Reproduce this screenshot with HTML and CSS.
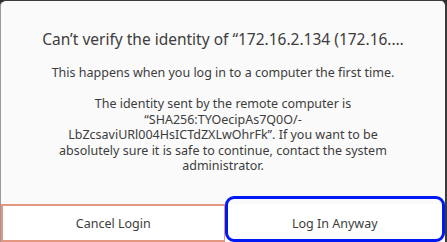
FILE: index.html
```html
<!DOCTYPE html>
<html>
<head>
<meta charset="utf-8">
<link rel="stylesheet" href="styles.css">
</head>
<body>
<div class="dialog">
  <div class="content">
    <h1 class="title">Can’t verify the identity of “172.16.2.134 (172.16.…</h1>
    <p class="msg">This happens when you log in to a computer the first time.</p>
    <p class="msg detail">The identity sent by the remote computer is “SHA256:TYOecipAs7Q0O/-<br>LbZcsaviURl004HsICTdZXLwOhrFk”. If you want to be absolutely sure it is safe to continue, contact the system administrator.</p>
  </div>
  <div class="actions">
    <button class="btn cancel">Cancel Login</button>
    <button class="btn accept">Log In Anyway</button>
  </div>
</div>
</body>
</html>
```
FILE: styles.css
```css
html, body {
  margin: 0;
  padding: 0;
  width: 447px;
  height: 242px;
  overflow: hidden;
  background: #2c2c2c;
}
.dialog {
  box-sizing: border-box;
  width: 447px;
  height: 242px;
  background: #fafafa;
  border-top: 1px solid #3a3a3a;
  border-left: 1px solid #9a9a9a;
  border-right: 2px solid #3a3a3a;
  border-radius: 6px 6px 0 0;
  display: flex;
  flex-direction: column;
  font-family: "Noto Sans", "DejaVu Sans", sans-serif;
  color: #3d3d3d;
}
.content {
  flex: 1;
  padding: 28px 30px 0;
  text-align: center;
}
.title {
  margin: 0;
  font-size: 15.5px;
  font-weight: normal;
  line-height: 20px;
}
.msg {
  margin: 16px 0 0;
  font-size: 12.5px;
  line-height: 15.4px;
}
.detail {
  margin-top: 16px;
  padding: 0 12px;
}
.actions {
  display: flex;
  height: 38px;
}
.btn {
  flex: 1;
  box-sizing: border-box;
  margin: 0;
  background: #ffffff;
  font-family: inherit;
  font-size: 12.5px;
  color: #3d3d3d;
  padding: 0;
}
.cancel {
  border: 2px solid #e39680;
  border-right-width: 1px;
}
.accept {
  position: relative;
  border: none;
}
.accept::after {
  content: "";
  position: absolute;
  left: 0;
  right: 0;
  top: -8px;
  bottom: 0;
  border: 3px solid #0019f5;
  border-radius: 9px;
}
```
